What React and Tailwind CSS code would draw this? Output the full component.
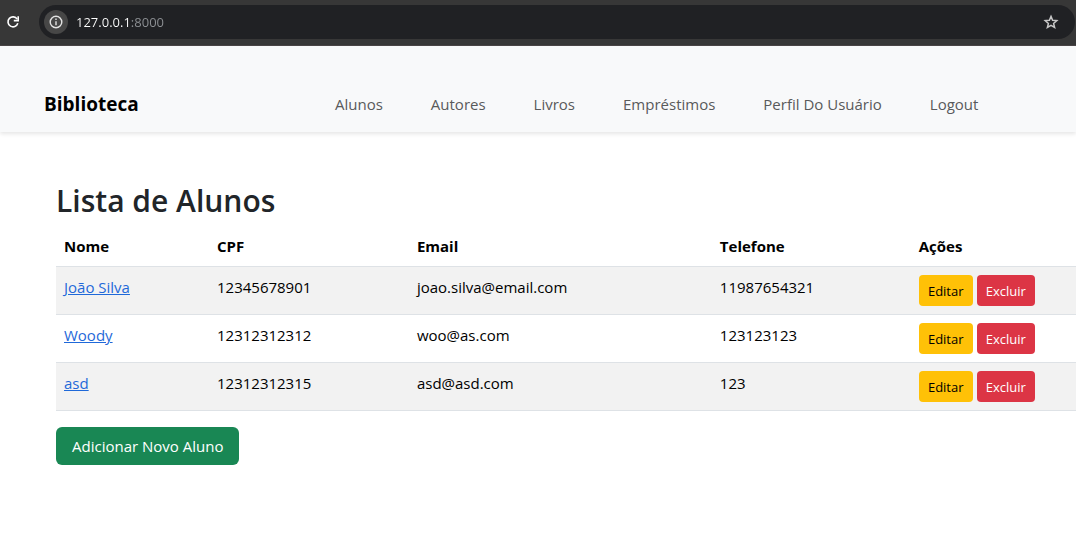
const links = ["Alunos", "Autores", "Livros", "Empréstimos", "Perfil Do Usuário", "Logout"];

const students = [
  { name: "João Silva", cpf: "12345678901", email: "joao.silva@email.com", phone: "11987654321" },
  { name: "Woody", cpf: "12312312312", email: "woo@as.com", phone: "123123123" },
  { name: "asd", cpf: "12312312315", email: "asd@asd.com", phone: "123" },
];

function BrowserBar() {
  return (
    <header className="flex items-center border-b border-[#4a4546] bg-[#373737] pt-[5px] pr-px pb-1.5 pl-1.5 text-white">
      <button aria-label="Recarregar" className="mr-[19px] shrink-0">
        <svg width="14" height="14" viewBox="0 0 14 14" fill="none" stroke="currentColor" strokeWidth="1.6">
          <path d="M11.2 4.1A5 5 0 1 0 11.8 8.3" />
          <path d="M12.2 1.2v4.4H7.8" />
        </svg>
      </button>
      <div className="flex h-[34px] flex-1 items-center rounded-full bg-[#202124] pr-4 pl-[5px]">
        <button aria-label="Informações do site" className="flex size-6 shrink-0 items-center justify-center rounded-full bg-[#474747] text-[#e3e3e3]">
          <svg width="14" height="14" viewBox="0 0 14 14" fill="none" stroke="currentColor" strokeWidth="1.4">
            <circle cx="7" cy="7" r="5.8" />
            <path d="M7 6.2v4M7 3.6v1.5" />
          </svg>
        </button>
        <input
          aria-label="Endereço"
          className="ml-2 min-w-0 flex-1 bg-linear-to-r from-white from-[54px] to-[#8e9195] to-[54px] bg-clip-text text-[13px] text-transparent outline-none"
          defaultValue="127.0.0.1:8000"
        />
        <button aria-label="Adicionar aos favoritos" className="shrink-0 text-[#c7c7c7]">
          <svg width="16" height="16" viewBox="0 0 16 16" fill="none" stroke="currentColor" strokeWidth="1.5">
            <path d="M8 2.4l1.6 3.8 4.2.4-3.2 2.8 1 4.1L8 11.3l-3.6 2.2 1-4.1-3.2-2.8 4.2-.4z" />
          </svg>
        </button>
      </div>
    </header>
  );
}

export default function App() {
  return (
    <div className="overflow-x-hidden bg-white font-['Open_Sans',sans-serif] text-[15px] leading-6 text-[#212529]">
      <BrowserBar />
      <nav className="flex h-[86px] items-center bg-[#f8f9fa] px-11 pt-[30px] shadow-[0_2px_4px_rgba(0,0,0,0.1)]">
        <a href="#" className="w-[291px] shrink-0 text-[19px] font-bold text-black">Biblioteca</a>
        <div className="flex gap-12 whitespace-nowrap text-[#595a5b]">
          {links.map((l) => <a key={l} href="#">{l}</a>)}
        </div>
      </nav>
      <main className="pt-[50px] pb-20 pl-14">
        <h1 className="mb-1.5 text-[30px] leading-[38px] font-semibold">Lista de Alunos</h1>
        <table className="w-full table-fixed text-left text-black">
          <thead>
            <tr className="border-b border-[#dee2e6]">
              <th className="w-[15%] p-2">Nome</th>
              <th className="w-[19.6%] p-2">CPF</th>
              <th className="w-[29.7%] p-2">Email</th>
              <th className="w-[19.5%] p-2">Telefone</th>
              <th className="p-2">Ações</th>
            </tr>
          </thead>
          <tbody>
            {students.map((s) => (
              <tr key={s.name} className="border-b border-[#dee2e6] align-top odd:bg-[#f2f2f2]">
                <td className="p-2"><a href="#" className="text-[#1f69d9] underline">{s.name}</a></td>
                <td className="p-2">{s.cpf}</td>
                <td className="p-2">{s.email}</td>
                <td className="p-2">{s.phone}</td>
                <td className="p-2">
                  <div className="flex gap-1 text-[13px]">
                    <button className="h-[31px] w-[54px] rounded bg-[#ffc107] text-black">Editar</button>
                    <button className="h-[31px] w-[58px] rounded bg-[#dc3545] text-white">Excluir</button>
                  </div>
                </td>
              </tr>
            ))}
          </tbody>
        </table>
        <button className="mt-4 h-[38px] rounded-md bg-[#198754] px-4 text-white">Adicionar Novo Aluno</button>
      </main>
    </div>
  );
}
